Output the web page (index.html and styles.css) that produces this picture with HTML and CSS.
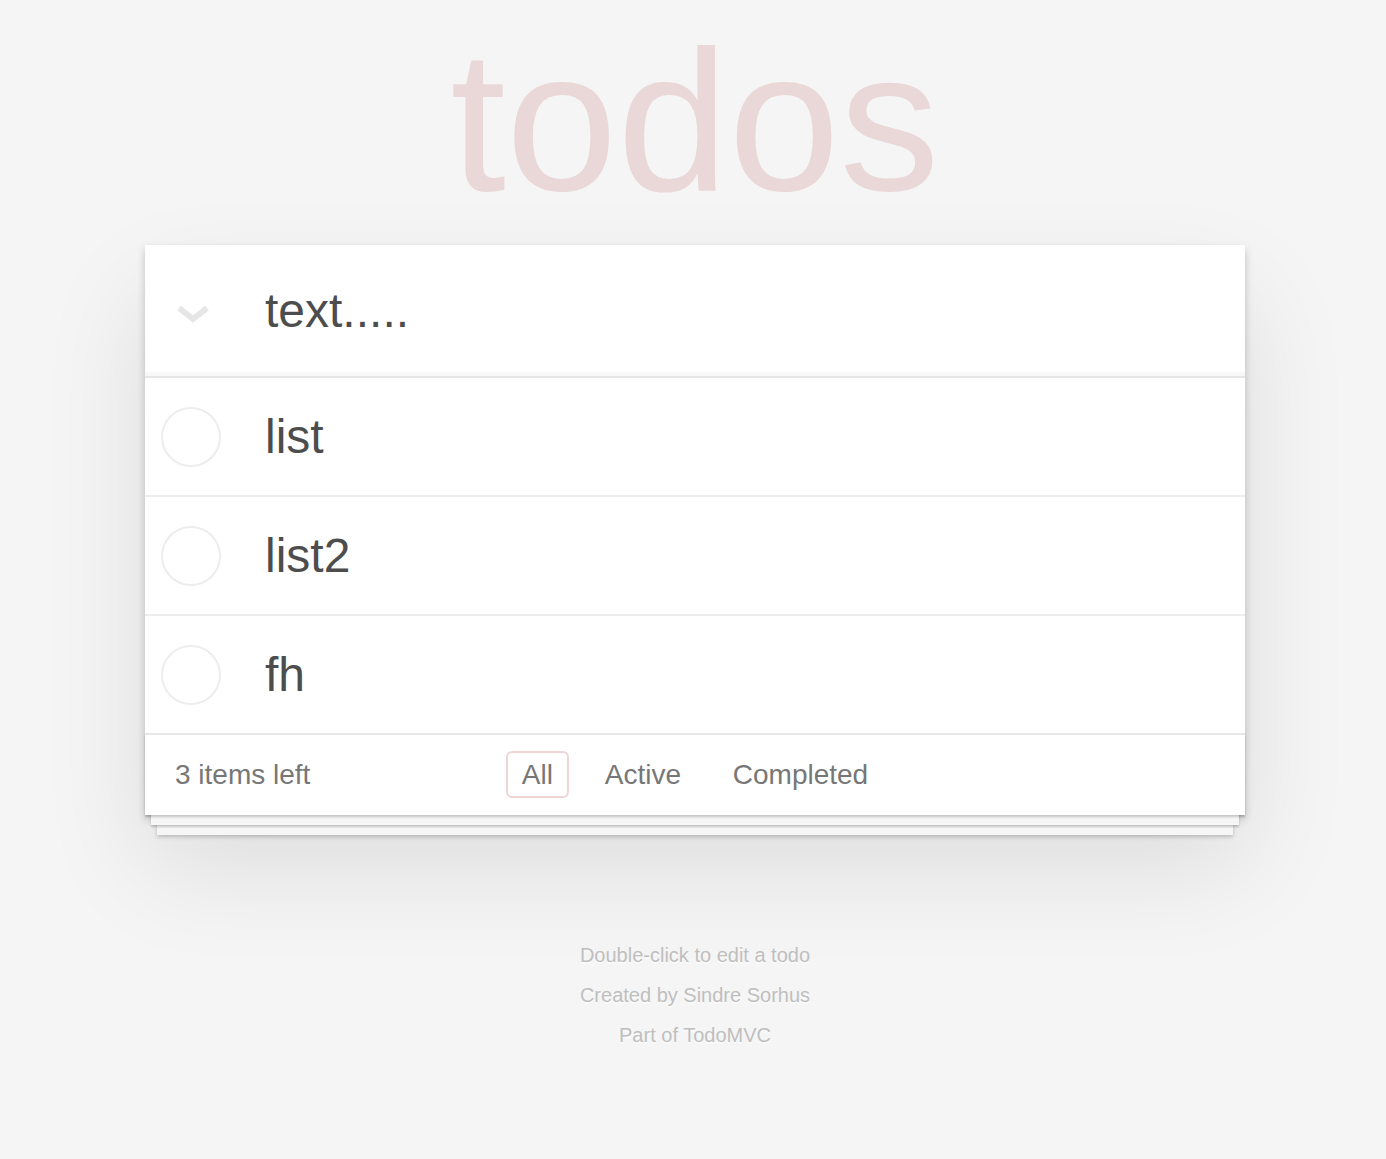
FILE: index.html
```html
<!DOCTYPE html>
<html lang="en">
<head>
<meta charset="utf-8">
<title>todos</title>
<link rel="stylesheet" href="styles.css">
</head>
<body>
<div class="page">
  <h1 class="title">todos</h1>
  <section class="todoapp">
    <header class="header">
      <div class="toggle-all">
        <svg width="34" height="20" viewBox="0 0 34 20"><polyline points="3,4 17,15 31,4" fill="none" stroke="#e6e6e6" stroke-width="6"/></svg>
      </div>
      <div class="new-todo">text.....</div>
    </header>
    <ul class="todo-list">
      <li class="todo"><span class="toggle"></span><span class="label">list</span></li>
      <li class="todo"><span class="toggle"></span><span class="label">list2</span></li>
      <li class="todo"><span class="toggle"></span><span class="label">fh</span></li>
    </ul>
    <footer class="footer">
      <span class="todo-count">3 items left</span>
      <ul class="filters">
        <li><a class="selected">All</a></li>
        <li><a>Active</a></li>
        <li><a>Completed</a></li>
      </ul>
      <span></span>
    </footer>
  </section>
  <footer class="info">
    <p>Double-click to edit a todo</p>
    <p>Created by Sindre Sorhus</p>
    <p>Part of TodoMVC</p>
  </footer>
</div>
</body>
</html>
```

FILE: styles.css
```css
html, body {
  margin: 0;
  padding: 0;
}
body {
  background: #f5f5f5;
  font-family: "Liberation Sans", Arial, Helvetica, sans-serif;
  font-size: 28px;
  line-height: 1.4em;
  color: #4d4d4d;
  padding: 21px 0 0 4px;
}
.page {
  width: 1100px;
  margin: 0 auto;
}
.title {
  margin: 0 0 24px 0;
  height: 200px;
  font-size: 200px;
  line-height: 200px;
  font-weight: normal;
  text-align: center;
  color: rgba(175, 47, 47, 0.15);
}
.todoapp {
  background: #fff;
  margin: 0 0 80px 0;
  box-shadow: 0 4px 8px 0 rgba(0, 0, 0, 0.2), 0 50px 100px 0 rgba(0, 0, 0, 0.1);
}
.header {
  display: flex;
  align-items: center;
  height: 131px;
  box-shadow: inset 0 -4px 2px rgba(0, 0, 0, 0.03);
}
.toggle-all {
  width: 89px;
  padding-left: 31px;
  display: flex;
  align-items: center;
  margin-top: 6px;
}
.toggle-all svg {
  display: block;
}
.new-todo {
  flex: 1;
  font-size: 48px;
  line-height: normal;
  color: #4d4d4d;
}
.todo-list {
  list-style: none;
  margin: 0;
  padding: 0;
  border-top: 2px solid #e6e6e6;
}
.todo {
  display: flex;
  align-items: center;
  border-bottom: 2px solid #ededed;
  font-size: 48px;
}
.todo:last-child {
  border-bottom: none;
}
.toggle {
  box-sizing: border-box;
  width: 60px;
  height: 60px;
  margin-left: 16px;
  border: 2px solid #ededed;
  border-radius: 50%;
  flex: none;
}
.label {
  padding: 30px 30px 30px 44px;
  line-height: 57px;
  color: #4d4d4d;
}
.footer {
  display: grid;
  grid-template-columns: 1fr auto 1fr;
  align-items: center;
  color: #777;
  padding: 20px 30px;
  height: 40px;
  border-top: 2px solid #e6e6e6;
  background: #fff;
  box-shadow: 0 2px 2px rgba(0, 0, 0, 0.2),
    0 16px 0 -6px #f6f6f6,
    0 18px 2px -6px rgba(0, 0, 0, 0.2),
    0 32px 0 -12px #f6f6f6,
    0 34px 4px -12px rgba(0, 0, 0, 0.2);
}
.todo-count {
  text-align: left;
}
.filters {
  list-style: none;
  margin: 0;
  padding: 0;
  white-space: nowrap;
}
.filters li {
  display: inline;
}
.filters a {
  color: inherit;
  margin: 6px;
  padding: 6px 14px;
  border: 2px solid transparent;
  border-radius: 6px;
}
.filters a.selected {
  border-color: rgba(175, 47, 47, 0.2);
}
.info {
  margin: 130px auto 0;
  color: #bfbfbf;
  font-size: 20px;
  text-shadow: 0 2px 0 rgba(255, 255, 255, 0.5);
  text-align: center;
}
.info p {
  line-height: 1;
  margin: 20px 0;
}
```
